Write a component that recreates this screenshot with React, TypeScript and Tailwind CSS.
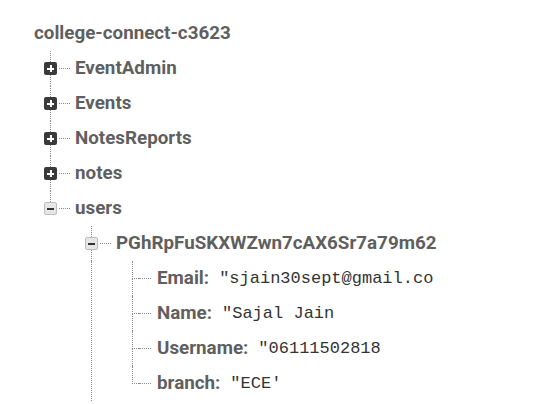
import React from "react";

type TreeNode = {
  name: string;
  value?: string;
  children?: TreeNode[];
  expanded?: boolean;
};

const data: TreeNode = {
  name: "college-connect-c3623",
  children: [
    { name: "EventAdmin", children: [] },
    { name: "Events", children: [] },
    { name: "NotesReports", children: [] },
    { name: "notes", children: [] },
    {
      name: "users",
      expanded: true,
      children: [
        {
          name: "PGhRpFuSKXWZwn7cAX6Sr7a79m62",
          expanded: true,
          children: [
            { name: "Email", value: "\"sjain30sept@gmail.co" },
            { name: "Name", value: "\"Sajal Jain" },
            { name: "Username", value: "\"06111502818" },
            { name: "branch", value: "\"ECE'" },
          ],
        },
        // more users below the fold
        { name: "...", children: [] },
      ],
    },
  ],
};

const dotted = "border-dotted border-[#8a8a8a]";

function ToggleBox({ open }: { open: boolean }) {
  if (open) {
    return (
      <div className="w-[13px] h-[13px] shrink-0 rounded-[2px] bg-[#e6e6e6] border border-[#bdbdbd] flex items-center justify-center">
        <div className="w-[7px] h-[2px] bg-[#333]" />
      </div>
    );
  }
  return (
    <div className="relative w-[13px] h-[13px] shrink-0 rounded-[2px] bg-[#3a3a3a] flex items-center justify-center">
      <div className="w-[7px] h-[2px] bg-white" />
      <div className="absolute w-[2px] h-[7px] bg-white" />
    </div>
  );
}

function Row({ node, last }: { node: TreeNode; last: boolean }) {
  const leaf = node.value !== undefined;
  return (
    <div className="flex items-center h-[35px]">
      {leaf ? (
        <div className="w-[13px] self-stretch flex flex-col">
          <div className={`flex-1 ml-[6px] border-l border-b ${dotted}`} />
          <div className={`flex-1 ml-[6px] ${last ? "" : `border-l ${dotted}`}`} />
        </div>
      ) : (
        <div className="w-[13px] self-stretch flex flex-col items-center">
          <div className={`flex-1 w-0 border-l ${dotted}`} />
          <ToggleBox open={!!node.expanded} />
          <div className={`flex-1 w-0 ${last ? "" : `border-l ${dotted}`}`} />
        </div>
      )}
      <div className={`border-t ${dotted} ${leaf ? "w-[12px] mr-[6px]" : "w-[11px] ml-[2px] mr-[5px]"}`} />
      <span className="text-[18.8px] font-bold text-[#5f5f5f] whitespace-nowrap">
        {node.name}
        {leaf && ":"}
      </span>
      {leaf && (
        <span className="ml-[10px] text-[17px] text-[#333] whitespace-nowrap font-['Liberation_Mono',monospace]">
          {node.value}
        </span>
      )}
    </div>
  );
}

function Node({ node, last }: { node: TreeNode; last: boolean }) {
  if (node.name === "...") return null;
  return (
    <div>
      <Row node={node} last={last} />
      {node.expanded && node.children && (
        <div className="flex">
          <div className="w-[13px] flex justify-center">
            <div className={`w-0 ${last ? "" : `border-l ${dotted}`}`} />
          </div>
          <div className="ml-[28px]">
            {node.children.map((c, i) => (
              <Node key={c.name} node={c} last={i === node.children!.length - 1} />
            ))}
          </div>
        </div>
      )}
    </div>
  );
}

export default function App() {
  const root = data;
  return (
    <div className="w-[544px] h-[404px] overflow-hidden bg-white font-['Roboto','Liberation_Sans',sans-serif] pt-[16px]">
      <div className="pl-[34px] h-[35px] flex items-center text-[18.8px] font-bold text-[#5f5f5f]">
        {root.name}
      </div>
      <div className="ml-[44px] flex flex-col">
        {root.children!.map((c, i) => (
          <Node key={c.name} node={c} last={i === root.children!.length - 1} />
        ))}
      </div>
    </div>
  );
}
